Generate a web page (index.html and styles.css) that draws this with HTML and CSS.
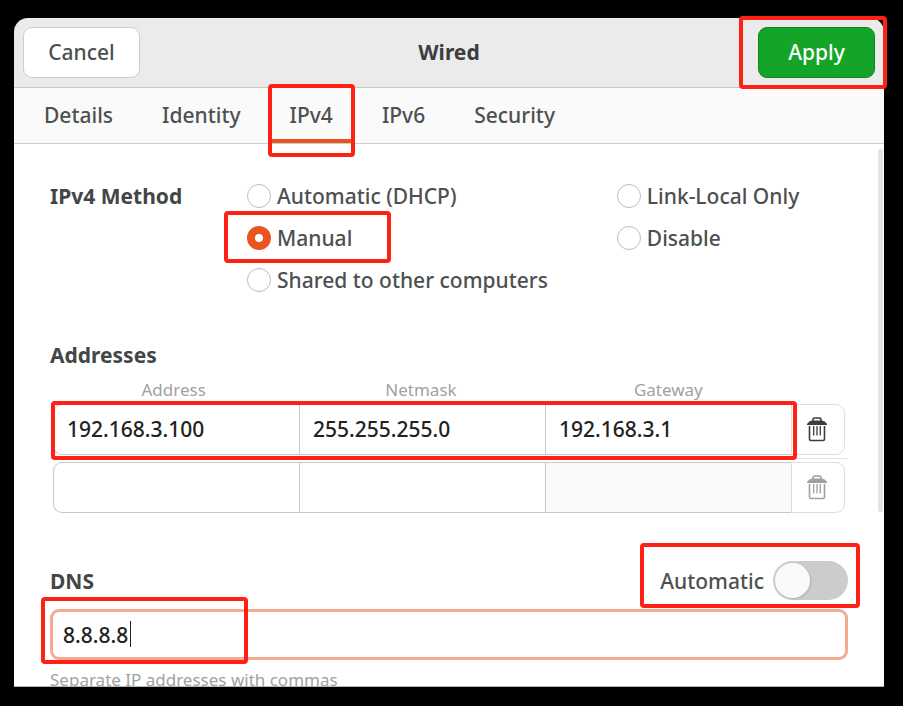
FILE: index.html
```html
<!DOCTYPE html>
<html lang="en">
<head>
    <meta charset="UTF-8">
    <meta name="viewport" content="width=device-width, initial-scale=1.0">
    <title>Wired</title>
    <link rel="stylesheet" href="styles.css">
</head>
<body>
    <svg class="symbols" aria-hidden="true">
        <symbol id="trash" viewBox="0 0 20 25">
            <path d="M6 5V2.500Q6 1 7.500 1h5Q14 1 14 2.500V5" fill="none" stroke="currentColor" stroke-width="1.600"/>
            <path d="M0 8V7Q2 3.800 5 3.500H15Q18 3.800 20 7V8Z" fill="currentColor"/>
            <path d="M2.500 9V22Q2.500 23.500 4 23.500H16Q17.500 23.500 17.500 22V9" fill="none" stroke="currentColor" stroke-width="1.600"/>
            <path d="M6.700 9V18.500M10 9V18.500M13.300 9V18.500" fill="none" stroke="currentColor" stroke-width="1.300"/>
        </symbol>
    </svg>

    <main class="dialog">
        <header class="header">
            <button class="btn">Cancel</button>
            <h1 class="title">Wired</h1>
            <button class="btn btn-apply mark mark-apply">Apply</button>
        </header>

        <nav class="tabs">
            <a class="tab" href="#details">Details</a>
            <a class="tab" href="#identity">Identity</a>
            <a class="tab active mark mark-tab" href="#ipv4">IPv4</a>
            <a class="tab" href="#ipv6">IPv6</a>
            <a class="tab" href="#security">Security</a>
        </nav>

        <div class="content" id="ipv4">
            <div class="method" role="radiogroup" aria-labelledby="method-title">
                <h2 class="heading" id="method-title">IPv4 Method</h2>
                <label class="option"><input class="radio" type="radio" name="method">Automatic (DHCP)</label>
                <label class="option"><input class="radio" type="radio" name="method">Link-Local Only</label>
                <label class="option mark mark-manual"><input class="radio" type="radio" name="method" checked>Manual</label>
                <label class="option"><input class="radio" type="radio" name="method">Disable</label>
                <label class="option"><input class="radio" type="radio" name="method">Shared to other computers</label>
            </div>

            <section class="addresses">
                <h2 class="heading">Addresses</h2>
                <div class="columns">
                    <label for="address1">Address</label>
                    <label for="netmask1">Netmask</label>
                    <label for="gateway1">Gateway</label>
                </div>
                <div class="row">
                    <div class="entries mark mark-row">
                        <input class="entry" id="address1" type="text" value="192.168.3.100">
                        <input class="entry" id="netmask1" type="text" value="255.255.255.0">
                        <input class="entry" id="gateway1" type="text" value="192.168.3.1">
                    </div>
                    <button class="delete" aria-label="Delete"><svg class="icon"><use href="#trash"/></svg></button>
                </div>
                <div class="row">
                    <div class="entries">
                        <input class="entry" type="text" aria-label="Address">
                        <input class="entry" type="text" aria-label="Netmask">
                        <input class="entry" type="text" aria-label="Gateway" disabled>
                    </div>
                    <button class="delete" aria-label="Delete" disabled><svg class="icon"><use href="#trash"/></svg></button>
                </div>
            </section>

            <section class="dns">
                <div class="dns-head">
                    <h2 class="heading"><label for="dns">DNS</label></h2>
                    <label class="auto mark mark-auto">Automatic<input class="switch" type="checkbox" role="switch"></label>
                </div>
                <div class="dns-field">
                    <input class="dns-input" id="dns" type="text" value="8.8.8.8">
                    <span class="caret"></span>
                    <span class="mark-dns"></span>
                </div>
                <p class="hint">Separate IP addresses with commas</p>
            </section>
            <div class="scrollbar"></div>
        </div>
    </main>
</body>
</html>
```
FILE: styles.css
```css
* {
    box-sizing: border-box;
}

body {
    margin: 0;
    height: 100vh;
    padding: 18px 19px 19px 14px;
    display: flex;
    background-color: #000000;
    color: #4d5051;
    font-family: "Noto Sans", "Open Sans", sans-serif;
    font-size: 21px;
    font-weight: 500;
    line-height: 30px;
}

button,
input {
    margin: 0;
    font: inherit;
    color: inherit;
}

h1,
h2,
p {
    margin: 0;
}

.symbols {
    display: none;
}

.dialog {
    flex: 1;
    min-width: 0;
    display: flex;
    flex-direction: column;
}

/* header bar */
.header {
    display: flex;
    justify-content: space-between;
    align-items: center;
    height: 70px;
    padding: 0 9px 1px;
    background-color: #ebebeb;
    border-bottom: 1px solid #c8c8c8;
    border-radius: 14px 14px 0 0;
}

.title {
    font-size: 21px;
    font-weight: bold;
    color: #3d3d3d;
}

.btn {
    width: 117px;
    height: 51px;
    padding: 0 0 1px;
    background-color: #ffffff;
    border: 1px solid #cdcdcd;
    border-radius: 9px;
    cursor: pointer;
}

.btn-apply {
    background-color: #14a528;
    border-color: #108321;
    color: #ffffff;
}

/* tabs */
.tabs {
    display: flex;
    gap: 9px;
    height: 56px;
    padding: 0 10px;
    background-color: #fafafa;
    border-bottom: 1px solid #cdcdcd;
}

.tab {
    display: flex;
    align-items: center;
    padding: 2px 20px 0;
    border-bottom: 4px solid transparent;
    color: inherit;
    text-decoration: none;
}

.tab.active {
    border-bottom-color: #e95420;
}

/* page */
.content {
    position: relative;
    flex: 1;
    min-height: 0;
    overflow: hidden;
    padding: 31px 36px 0;
    background-color: #ffffff;
    border-bottom: 1px solid #b5b5b5;
}

.heading {
    font-size: 21px;
    font-weight: bold;
    color: #434646;
}

.method {
    display: grid;
    grid-template-columns: 197px 8fr 5fr;
    grid-auto-rows: 42px;
    align-items: center;
}

.method .option:nth-of-type(odd) {
    grid-column: 2;
}

.option {
    display: flex;
    align-items: center;
    gap: 6px;
    justify-self: start;
    white-space: nowrap;
}

.radio {
    appearance: none;
    width: 24px;
    height: 24px;
    border: 1px solid #bdbdbd;
    border-radius: 50%;
    background-color: #ffffff;
}

.radio:checked {
    border: 8px solid #e95420;
}

.addresses {
    margin-top: 39px;
}

.columns {
    display: grid;
    grid-template-columns: repeat(3, 1fr);
    padding: 10px 56px 0 0;
    font-size: 17px;
    font-weight: normal;
    line-height: 20px;
    text-align: center;
    color: #a0a2a2;
}

.row {
    display: flex;
    padding: 3px;
}

.row + .row {
    border-top: 1px solid #e4e4e4;
}

.columns + .row {
    padding-top: 4px;
}

.entries {
    flex: 1;
    min-width: 0;
    display: flex;
}

.entry {
    flex: 1;
    min-width: 0;
    height: 51px;
    padding: 0 13px 1px;
    background-color: #ffffff;
    border: 1px solid #c8c8c8;
    border-right: 0;
    border-radius: 0;
    color: #222222;
}

.entry:first-child {
    border-radius: 9px 0 0 9px;
}

.entry:disabled {
    background-color: #fafafa;
}

.delete {
    flex: none;
    display: flex;
    align-items: center;
    justify-content: center;
    width: 54px;
    padding: 0 2px 0 0;
    background-color: #ffffff;
    border: 1px solid #dedede;
    border-radius: 0 9px 9px 0;
    color: #3d3d3d;
}

.delete:disabled {
    color: #a0a0a0;
}

.icon {
    width: 20px;
    height: 25px;
}

.dns {
    margin-top: 45px;
}

.dns-head {
    display: flex;
    justify-content: space-between;
    align-items: center;
}

.auto {
    display: flex;
    align-items: center;
    gap: 9px;
}

.switch {
    appearance: none;
    width: 75px;
    height: 39px;
    padding: 2px;
    border-radius: 20px;
    background-color: #cccccc;
}

.switch::before {
    content: "";
    display: block;
    width: 35px;
    height: 35px;
    border-radius: 50%;
    background-color: #fafafa;
    box-shadow: 1px 1px 2px #b0b0b0;
}

.dns-field {
    position: relative;
    margin-top: 9px;
}

.dns-input {
    display: block;
    width: 100%;
    height: 51px;
    padding: 0 10px;
    background-color: #ffffff;
    border: 3px solid #f6aa90;
    border-radius: 9px;
    color: #222222;
}

.caret {
    position: absolute;
    left: 80px;
    top: 12px;
    width: 1px;
    height: 26px;
    background-color: #222222;
}

.hint {
    margin-top: 10px;
    font-size: 17px;
    font-weight: normal;
    line-height: 20px;
    color: #a0a2a2;
}

.scrollbar {
    position: absolute;
    top: 5px;
    right: 1px;
    width: 5px;
    height: 67%;
    border-radius: 3px;
    background-color: #e4e4e4;
}

/* red highlight frames */
.mark {
    position: relative;
}

.mark::after,
.mark-dns {
    content: "";
    position: absolute;
    z-index: 2;
    border: 4px solid #ff2116;
    border-radius: 4px;
    pointer-events: none;
}

.mark-apply::after {
    inset: -12px -13px -12px -20px;
}

.mark-tab::after {
    inset: -4px -2px -18px;
}

.mark-manual::after {
    inset: -12px -39px -10px -23px;
}

.mark-row::after {
    inset: -3px -6px -5px -2px;
}

.mark-auto::after {
    inset: -18px -12px -8px -20px;
}

.mark-dns {
    inset: -12px auto -4px -9px;
    width: 207px;
}
```
